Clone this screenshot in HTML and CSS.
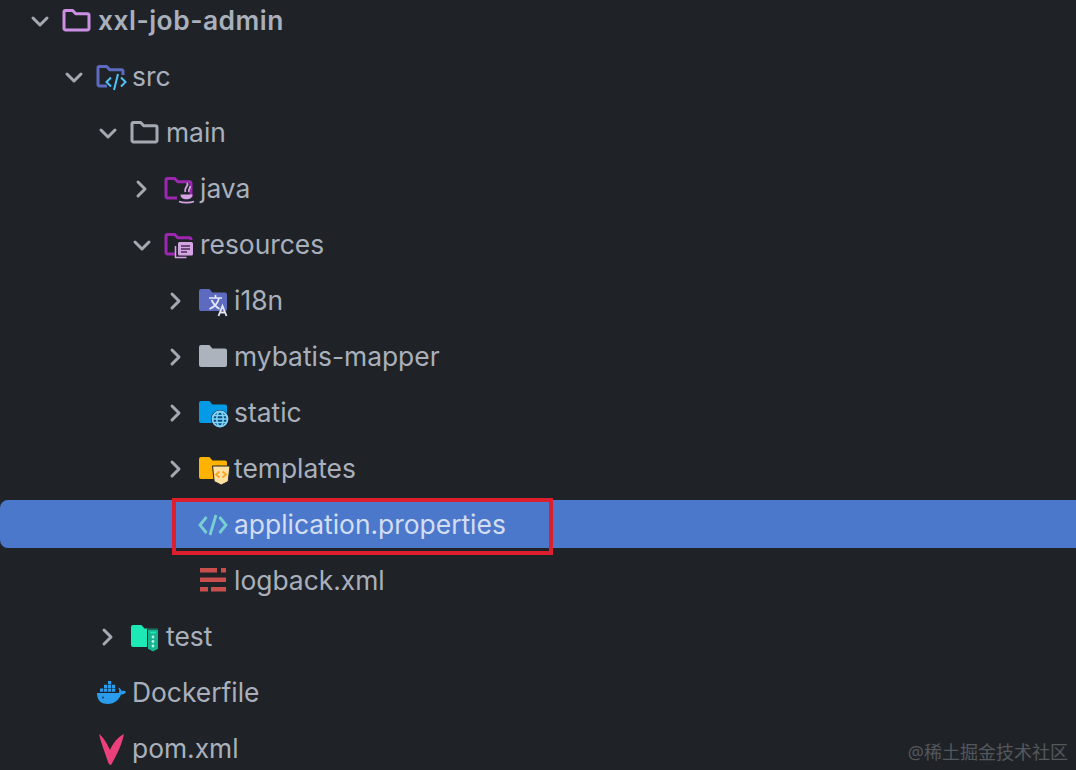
FILE: index.html
```html
<!DOCTYPE html>
<html lang="en">
<head>
<meta charset="utf-8">
<title>Project tree</title>
<link rel="stylesheet" href="styles.css">
</head>
<body>
<svg class="defs" width="0" height="0" aria-hidden="true">
  <defs>
    <path id="folder-o" d="M4.500 5.500h7.200l3 3.200h11.800a1.500 1.500 0 0 1 1.500 1.500v13.300a1.500 1.500 0 0 1-1.500 1.500h-22a1.500 1.500 0 0 1-1.500-1.500V7a1.500 1.500 0 0 1 1.500-1.500z" fill="none" stroke-width="3" stroke-linejoin="round"/>
    <path id="folder-f" d="M4 4h8.400l3 3.400H28a2 2 0 0 1 2 2V24a2 2 0 0 1-2 2H4a2 2 0 0 1-2-2V6a2 2 0 0 1 2-2z"/>
    <path id="chev-d" d="M5 9l7 7 7-7" fill="none" stroke="#a5aab2" stroke-width="3" stroke-linecap="round" stroke-linejoin="round"/>
    <path id="chev-r" d="M8 5l7 7-7 7" fill="none" stroke="#a5aab2" stroke-width="3" stroke-linecap="round" stroke-linejoin="round"/>
  </defs>
</svg>
<main class="tree">
  <div class="row d0">
    <svg class="chev" viewBox="0 0 24 24"><use href="#chev-d"/></svg>
    <svg class="ico" viewBox="0 0 32 32"><use href="#folder-o" stroke="#cb8fe3"/></svg>
    <span class="label strong">xxl-job-admin</span>
  </div>
  <div class="row d1">
    <svg class="chev" viewBox="0 0 24 24"><use href="#chev-d"/></svg>
    <svg class="ico" viewBox="0 0 32 32">
      <path d="M12 25H4.500A1.500 1.500 0 0 1 3 23.500V7a1.500 1.500 0 0 1 1.500-1.500h7.200l3 3.200h11.800A1.500 1.500 0 0 1 28 10.200V14" fill="none" stroke="#5c6bc0" stroke-width="3" stroke-linejoin="round"/>
      <path d="M16 16.500l-4.500 4.500 4.500 4.500M26 16.500l4.500 4.500-4.500 4.500M23 13l-4 16" fill="none" stroke="#4fc3f7" stroke-width="2"/>
    </svg>
    <span class="label">src</span>
  </div>
  <div class="row d2">
    <svg class="chev" viewBox="0 0 24 24"><use href="#chev-d"/></svg>
    <svg class="ico" viewBox="0 0 32 32"><use href="#folder-o" stroke="#a5aab2"/></svg>
    <span class="label">main</span>
  </div>
  <div class="row d3">
    <svg class="chev" viewBox="0 0 24 24"><use href="#chev-r"/></svg>
    <svg class="ico" viewBox="0 0 32 32">
      <path d="M14 25H4.500A1.500 1.500 0 0 1 3 23.500V7a1.500 1.500 0 0 1 1.500-1.500h7.200l3 3.200h11.800A1.500 1.500 0 0 1 28 10.200V24" fill="none" stroke="#9c27b0" stroke-width="3" stroke-linejoin="round"/>
      <path d="M19 24h12.500v1c0 2-2 3-6 3s-6-1-6-3z" fill="#1f2329"/>
      <path d="M24 10c2.500 3-3.500 4.500-1.500 9M27 13c1 2.500-2.500 3-1 6" fill="none" stroke="#d5a3e4" stroke-width="1.800"/>
      <path d="M17.500 21.500h12c0 3-2 4.800-6 4.800s-6-1.800-6-4.800z" fill="#d5a3e4"/>
      <path d="M16 28.500c4 1.500 11 1.500 15 0" fill="none" stroke="#d5a3e4" stroke-width="1.800"/>
    </svg>
    <span class="label">java</span>
  </div>
  <div class="row d3">
    <svg class="chev" viewBox="0 0 24 24"><use href="#chev-d"/></svg>
    <svg class="ico" viewBox="0 0 32 32">
      <path d="M12 25H4.500A1.500 1.500 0 0 1 3 23.500V7a1.500 1.500 0 0 1 1.500-1.500h7.200l3 3.200h11.800A1.500 1.500 0 0 1 28 10.200V11" fill="none" stroke="#9c27b0" stroke-width="3" stroke-linejoin="round"/>
      <path d="M15 14.500a1.500 1.500 0 0 1 1.500-1.500h12a1.500 1.500 0 0 1 1.500 1.500V25a1.500 1.500 0 0 1-1.500 1.500h-12A1.500 1.500 0 0 1 15 25z" fill="#d5a3e4"/>
      <path d="M18 17h9M18 20h9M18 23h6" stroke="#4a2f55" stroke-width="1.500"/>
      <path d="M12.500 17v11.500h11" fill="none" stroke="#d5a3e4" stroke-width="1.500"/>
    </svg>
    <span class="label">resources</span>
  </div>
  <div class="row d4">
    <svg class="chev" viewBox="0 0 24 24"><use href="#chev-r"/></svg>
    <svg class="ico" viewBox="0 0 32 32">
      <use href="#folder-f" fill="#5c6bc0"/>
      <path d="M12 13h13M18.500 10v3M22 13c-1 5-5 9-9.500 11M14.500 15c2 4 4.500 7 8 9" fill="none" stroke="#e4e7f6" stroke-width="1.700"/>
      <path d="M21.500 31l4-10 4 10M23 27.500h5" fill="none" stroke="#e4e7f6" stroke-width="1.800"/>
    </svg>
    <span class="label">i18n</span>
  </div>
  <div class="row d4">
    <svg class="chev" viewBox="0 0 24 24"><use href="#chev-r"/></svg>
    <svg class="ico" viewBox="0 0 32 32"><use href="#folder-f" fill="#adb3bd"/></svg>
    <span class="label">mybatis-mapper</span>
  </div>
  <div class="row d4">
    <svg class="chev" viewBox="0 0 24 24"><use href="#chev-r"/></svg>
    <svg class="ico" viewBox="0 0 32 32">
      <use href="#folder-f" fill="#039be5"/>
      <circle cx="23" cy="22" r="9" fill="#1f2329"/>
      <circle cx="23" cy="22" r="7.500" fill="#0b4f78"/>
      <circle cx="23" cy="22" r="7.500" fill="none" stroke="#81d4fa" stroke-width="1.800"/>
      <ellipse cx="23" cy="22" rx="3.200" ry="7.500" fill="none" stroke="#81d4fa" stroke-width="1.500"/>
      <path d="M15.500 22h15M16.500 18.500h13M16.500 25.500h13" stroke="#81d4fa" stroke-width="1.400"/>
    </svg>
    <span class="label">static</span>
  </div>
  <div class="row d4">
    <svg class="chev" viewBox="0 0 24 24"><use href="#chev-r"/></svg>
    <svg class="ico" viewBox="0 0 32 32">
      <use href="#folder-f" fill="#ffb300"/>
      <path d="M15.500 13h17.500l-1.800 15.500-7 3.500-7-3.500z" fill="#ffe0a3" stroke="#1f2329" stroke-width="1"/>
      <path d="M22.500 18.500l-3.500 3 3.500 3M25.500 18.500l3.500 3-3.500 3" fill="none" stroke="#f5a623" stroke-width="1.800"/>
    </svg>
    <span class="label">templates</span>
  </div>
  <div class="row d4 selected">
    <span class="chev"></span>
    <svg class="ico" viewBox="0 0 32 32">
      <path d="M9.500 8L3 16l6.500 8M22.500 8L29 16l-6.500 8M19 6l-6 20" fill="none" stroke="#78cfd4" stroke-width="2.800"/>
    </svg>
    <span class="label">application.properties</span>
    <span class="marker"></span>
  </div>
  <div class="row d4">
    <span class="chev"></span>
    <svg class="ico" viewBox="0 0 32 32">
      <path d="M3 3h17v4.500H3zM24 3h5v4.500h-5zM3 12.500h26V17H3zM3 22h8v4.500H3zM14 22h15v4.500H14z" fill="#c94f4f"/>
    </svg>
    <span class="label">logback.xml</span>
  </div>
  <div class="row d2">
    <svg class="chev" viewBox="0 0 24 24"><use href="#chev-r"/></svg>
    <svg class="ico" viewBox="0 0 32 32">
      <use href="#folder-f" fill="#1de9b6"/>
      <path d="M18.500 8h11v20l-5.500 3-5.500-3z" fill="#17b492" stroke="#1f2329" stroke-width="1"/>
      <path d="M21 11.500h6" stroke="#1de9b6" stroke-width="1.600"/>
      <circle cx="24" cy="16" r="1.400" fill="#b5f5e5"/>
      <circle cx="24" cy="20.500" r="1.400" fill="#b5f5e5"/>
      <circle cx="24" cy="25" r="1.400" fill="#b5f5e5"/>
    </svg>
    <span class="label">test</span>
  </div>
  <div class="row d1">
    <span class="chev"></span>
    <svg class="ico" viewBox="0 0 32 32">
      <path d="M2 16h22c.8-2.500-.2-4-.7-5.500 1.700.5 3 2 3.400 3.700 1.500-.6 3.300-.5 4.300.8-1 2-3 2.500-5 2.500-2 5.500-7 9.500-13 9.500-8 0-11-4.500-11-11z" fill="#2b9cec"/>
      <path d="M5 11.500h3.200v3.200H5zM9 11.500h3.200v3.200H9zM13 11.500h3.200v3.200H13zM17 11.500h3.200v3.200H17zM9 7.800h3.200V11H9zM13 7.800h3.200V11H13zM17 7.800h3.200V11H17zM13 4h3.200v3.200H13z" fill="#2b9cec"/>
      <circle cx="8" cy="20.500" r="1.100" fill="#14486f"/>
    </svg>
    <span class="label">Dockerfile</span>
  </div>
  <div class="row d1">
    <span class="chev"></span>
    <svg class="ico" viewBox="0 0 32 32">
      <path d="M4 1c4 3 8 9 11 16 3-7 8-13 14-16-2 10-7 21-13 31-1 0-2.500-1-3-3C10 20 6 10 4 1z" fill="#ec407a"/>
    </svg>
    <span class="label">pom.xml</span>
  </div>
</main>
<div class="watermark">@稀土掘金技术社区</div>
</body>
</html>
```
FILE: styles.css
```css
html, body {
  margin: 0;
  height: 100%;
  overflow: hidden;
}
body {
  position: relative;
  background: #1f2328;
  font-family: Inter, "Noto Sans", sans-serif;
  color: #a9b0bc;
}
.defs {
  position: absolute;
}
.tree {
  display: flex;
  flex-direction: column;
  gap: 8px;
  margin-top: -4px;
}
.row {
  position: relative;
  display: flex;
  align-items: center;
  box-sizing: border-box;
  height: 48px;
  flex: none;
  padding-top: 2px;
}
.d0 { padding-left: 28px; }
.d1 { padding-left: 62px; }
.d2 { padding-left: 96px; }
.d3 { padding-left: 130px; }
.d4 { padding-left: 164px; }
.chev {
  width: 24px;
  height: 24px;
  flex: none;
}
.ico {
  width: 32px;
  height: 32px;
  flex: none;
  margin-left: 9px;
  margin-right: 5px;
  overflow: visible;
}
.label {
  font-size: 26.4px;
  line-height: 44px;
  margin-top: -2px;
  white-space: nowrap;
}
.strong {
  font-weight: 600;
  letter-spacing: 0.5px;
}
.selected {
  background: #4c78cc;
  border-radius: 8px 0 0 8px;
}
.selected .label {
  color: #d3def2;
}
.marker {
  position: absolute;
  left: 172px;
  top: -2px;
  width: 381px;
  height: 57px;
  box-sizing: border-box;
  border: 4px solid #dc1f2e;
}
.watermark {
  position: absolute;
  right: 8px;
  bottom: 6px;
  font-family: "Noto Sans", "Noto Sans CJK SC", sans-serif;
  font-size: 18px;
  line-height: 24px;
  color: #54575c;
}
```
